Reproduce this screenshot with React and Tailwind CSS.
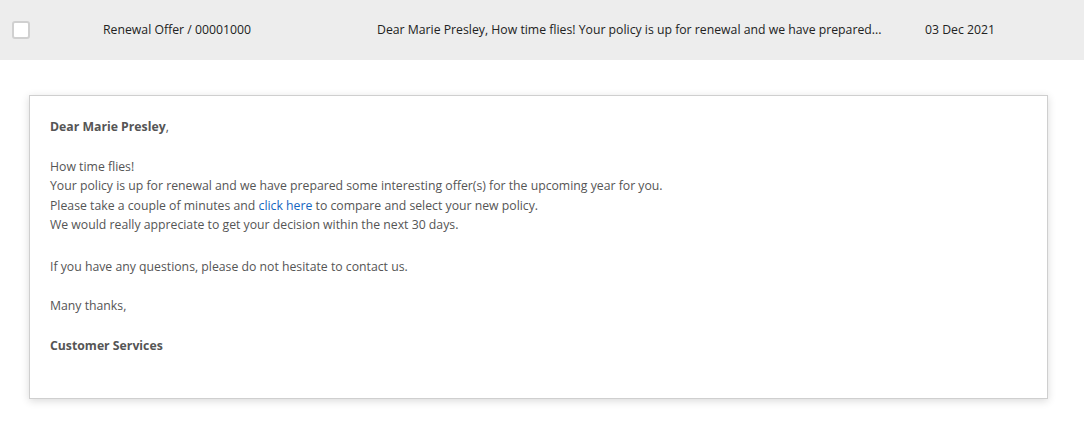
export default function App() {
  return (
    <div className="min-h-screen bg-white font-['Open_Sans',sans-serif] text-[12.25px]">
      {/* message row */}
      <div className="flex h-[60px] items-center bg-[#ededed] pl-3 text-[#222]">
        <div className="h-[18px] w-[18px] shrink-0 rounded-[3px] border-2 border-[#d0d0d0] bg-white" />
        <div className="ml-[73px] w-[274px] shrink-0 whitespace-nowrap">Renewal Offer / 00001000</div>
        <div className="w-[548px] shrink-0 whitespace-nowrap">
          Dear Marie Presley, How time flies! Your policy is up for renewal and we have prepared...
        </div>
        <div className="whitespace-nowrap">03 Dec 2021</div>
      </div>

      {/* message body */}
      <div className="px-[29px] pt-[35px]">
        <div className="w-[1019px] border border-[#cfcfcf] bg-white px-5 pt-[21px] pb-[43px] leading-[19.5px] text-[#555] shadow-[0_2px_8px_rgba(0,0,0,0.15)]">
          <p className="mb-[20px]">
            <span className="font-bold">Dear Marie Presley</span>,
          </p>
          <p className="mb-[22px]">
            How time flies!
            <br />
            Your policy is up for renewal and we have prepared some interesting offer(s) for the upcoming year for you.
            <br />
            Please take a couple of minutes and{" "}
            <a href="#" className="text-[#1565c0]">
              click here
            </a>{" "}
            to compare and select your new policy.
            <br />
            We would really appreciate to get your decision within the next 30 days.
          </p>
          <p className="mb-[20px]">If you have any questions, please do not hesitate to contact us.</p>
          <p className="mb-[20px]">Many thanks,</p>
          <p className="font-bold">Customer Services</p>
        </div>
      </div>
    </div>
  );
}
